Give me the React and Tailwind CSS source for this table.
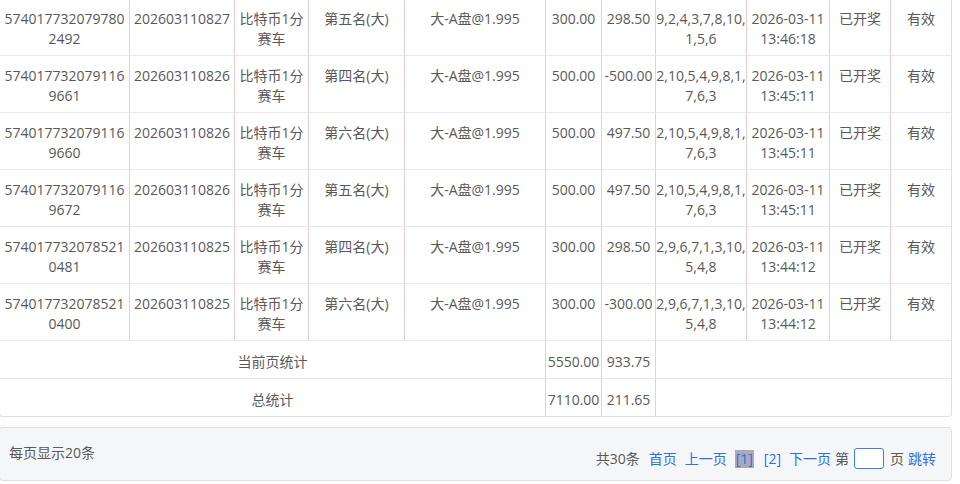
import React from "react";

const rows = [
  ["574017732079780", "2492", "202603110827", "第五名(大)", "300.00", "298.50", "9,2,4,3,7,8,10,", "1,5,6", "13:46:18"],
  ["574017732079116", "9661", "202603110826", "第四名(大)", "500.00", "-500.00", "2,10,5,4,9,8,1,", "7,6,3", "13:45:11"],
  ["574017732079116", "9660", "202603110826", "第六名(大)", "500.00", "497.50", "2,10,5,4,9,8,1,", "7,6,3", "13:45:11"],
  ["574017732079116", "9672", "202603110826", "第五名(大)", "500.00", "497.50", "2,10,5,4,9,8,1,", "7,6,3", "13:45:11"],
  ["574017732078521", "0481", "202603110825", "第四名(大)", "300.00", "298.50", "2,9,6,7,1,3,10,", "5,4,8", "13:44:12"],
  ["574017732078521", "0400", "202603110825", "第六名(大)", "300.00", "-300.00", "2,9,6,7,1,3,10,", "5,4,8", "13:44:12"],
];

const cell =
  "border-r border-b border-r-[#f2cccc] border-b-[#e9e9e9] pt-[10px] pb-[6px] leading-5 text-center whitespace-nowrap";
const lastCell = "border-b border-b-[#e9e9e9] pt-[10px] pb-[6px] leading-5 text-center whitespace-nowrap";
const sumCell = "border-r border-b border-r-[#f2cccc] border-b-[#e9e9e9] pt-[11px] pb-[6px] leading-5 text-center whitespace-nowrap";
const sumCell2 = "border-r border-r-[#f2cccc] pt-[11px] pb-[6px] leading-5 text-center whitespace-nowrap";

export default function App() {
  return (
    <div
      className="w-[960px] h-[484px] overflow-hidden bg-white text-[14px] text-[#595959]"
      style={{ fontFamily: '"Open Sans", "Noto Sans CJK SC", sans-serif' }}
    >
      <div className="ml-[-1px] mt-[-1px] w-[953px] border-x border-b border-[#dcdfe6] rounded-b-[4px] overflow-hidden">
        <div className="grid grid-cols-[130px_105px_74px_96px_141px_56px_54px_91px_83px_61px_60px]">
          {rows.map((r, i) => (
            <React.Fragment key={i}>
              <div className={cell}>
                {r[0]}
                <br />
                {r[1]}
              </div>
              <div className={cell}>{r[2]}</div>
              <div className={cell}>
                比特币1分
                <br />
                赛车
              </div>
              <div className={cell}>{r[3]}</div>
              <div className={cell}>大-A盘@1.995</div>
              <div className={cell}>{r[4]}</div>
              <div className={cell}>{r[5]}</div>
              <div className={cell}>
                {r[6]}
                <br />
                {r[7]}
              </div>
              <div className={cell}>
                2026-03-11
                <br />
                {r[8]}
              </div>
              <div className={cell}>已开奖</div>
              <div className={lastCell}>有效</div>
            </React.Fragment>
          ))}
          <div className={sumCell + " col-span-5"}>当前页统计</div>
          <div className={sumCell}>5550.00</div>
          <div className={sumCell}>933.75</div>
          <div className="col-span-4 border-b border-b-[#e9e9e9]"></div>
          <div className={sumCell2 + " col-span-5"}>总统计</div>
          <div className={sumCell2}>7110.00</div>
          <div className={sumCell2}>211.65</div>
          <div className="col-span-4"></div>
        </div>
      </div>

      <div className="ml-[-1px] mt-[10px] w-[953px] h-[54px] border border-[#dcdfe6] rounded-[4px] bg-[#f5f6f8] flex justify-between">
        <div className="pl-[9px] pt-[15px] leading-5">每页显示20条</div>
        <div className="pr-[15px] pt-[20px]">
          <div className="flex items-center h-[21px] leading-5">
            <span>共30条</span>
            <span className="ml-[9px] text-[#2f6fe4]">首页</span>
            <span className="ml-[8px] text-[#2f6fe4]">上一页</span>
            <span className="ml-[8px] bg-[#a9a9b9] text-[#2f6fe4] px-[1px] h-[18px] leading-[18px]">[1]</span>
            <span className="ml-[10px] text-[#2f6fe4]">[2]</span>
            <span className="ml-[8px] text-[#2f6fe4]">下一页</span>
            <span className="ml-[4px]">第</span>
            <span className="ml-[5px] w-[30px] h-[21px] border border-[#3b7cf0] rounded-[3px] bg-white"></span>
            <span className="ml-[6px]">页</span>
            <span className="ml-[4px] text-[#2f6fe4]">跳转</span>
          </div>
        </div>
      </div>
    </div>
  );
}
